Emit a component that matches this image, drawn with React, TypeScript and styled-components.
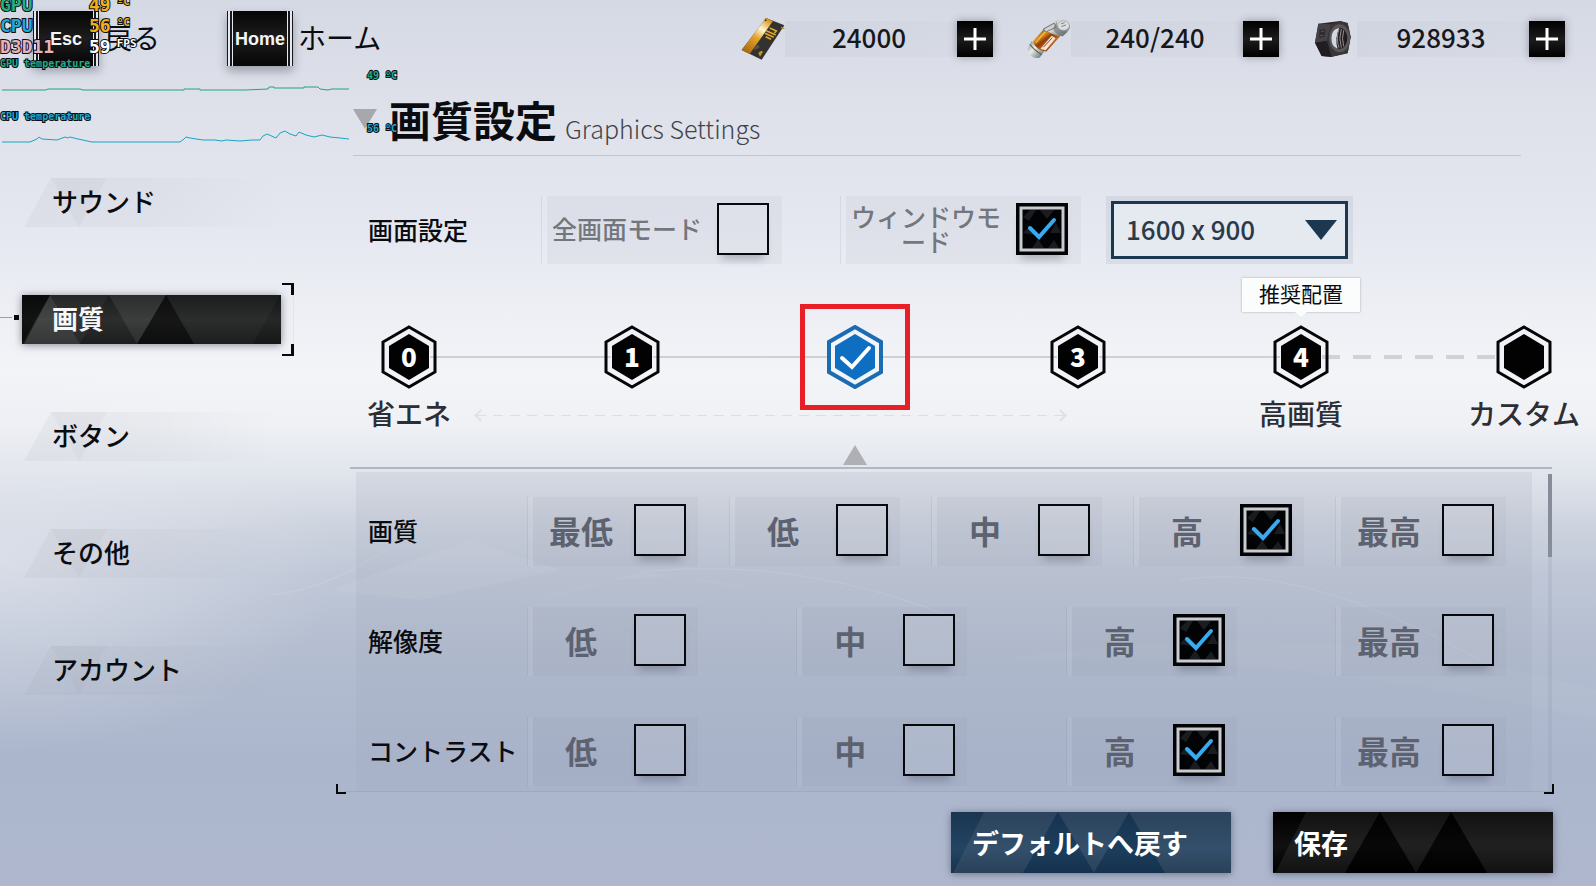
import React, { useState } from "react";
import styled, { createGlobalStyle, css } from "styled-components";

const GlobalStyle = createGlobalStyle`
  *, *::before, *::after { box-sizing: border-box; }
  body {
    margin: 0;
    font-family: "Noto Sans CJK JP", "Liberation Sans", sans-serif;
    color: #0b0c10;
  }
  button, input, select { font: inherit; color: inherit; margin: 0; }
`;

/* ---------- page ---------- */

const Page = styled.div`
  position: relative;
  isolation: isolate;
  display: flex;
  flex-direction: column;
  min-height: 100vh;
  overflow: hidden;
  background: linear-gradient(
    180deg,
    #d5d9e4 0%,
    #dee1ea 12%,
    #e4e7f0 25%,
    #edeff4 35%,
    #f3f4f8 42%,
    #eff1f5 48%,
    #e2e6ed 53%,
    #ced4df 59%,
    #bfc7d7 65%,
    #b4bed0 73%,
    #abb6cd 86%,
    #aeb7cd 100%
  );
`;

const Scenery = styled.svg`
  position: absolute;
  inset: 0;
  z-index: -1;
  width: 100%;
  height: 100%;
  pointer-events: none;
`;

const Body = styled.div`
  display: flex;
  align-items: flex-start;
  flex: 1;
`;

/* ---------- top bar ---------- */

const TopBar = styled.header`
  display: flex;
  align-items: center;
  justify-content: space-between;
  height: 77px;
  padding: 0 31px 0 33px;
`;

const KeyGroup = styled.nav`
  display: flex;
  gap: 67px;
`;

const KeyButton = styled.button`
  display: flex;
  align-items: center;
  gap: 5px;
  padding: 0;
  border: 0;
  background: none;
  font-size: 28px;
  line-height: 40px;
  white-space: nowrap;
`;

const KeyText = styled.span`
  padding-bottom: 3px;
`;

const KeyCap = styled.kbd`
  width: 66px;
  height: 55px;
  padding: 0 5px;
  border: solid #17181b;
  border-width: 0 1px;
  background: linear-gradient(#050505, #1d1d1d 50%, #050505) content-box,
    linear-gradient(90deg, #e6e8ee 2px, #17181b 2px 4px, #e6e8ee 4px calc(100% - 4px), #17181b calc(100% - 4px) calc(100% - 2px), #e6e8ee calc(100% - 2px));
  box-shadow: 0 5px 9px rgba(30, 34, 50, 0.35);
  color: #f5f5f5;
  font: bold 18px/56px "Liberation Sans", sans-serif;
  text-align: center;
`;

const Wallet = styled.div`
  display: flex;
  gap: 34px;
`;

const Currency = styled.div`
  display: flex;
  align-items: center;
  width: 252px;
`;

const CurrencyIcon = styled.svg`
  flex: none;
  width: 44px;
  height: 44px;
`;

const Amount = styled.span`
  flex: 1;
  height: 36px;
  padding-right: 4px;
  background: linear-gradient(90deg, rgba(150, 155, 170, 0.1), rgba(150, 155, 170, 0.04));
  color: #17181c;
  font-size: 26px;
  font-weight: 500;
  line-height: 32px;
  text-align: center;
`;

const PlusButton = styled.button`
  display: grid;
  place-items: center;
  width: 36px;
  height: 36px;
  padding: 0;
  border: 0;
  background: linear-gradient(#000, #1c1c1c 50%, #000);
  box-shadow: 0 0 8px rgba(40, 45, 60, 0.4);
`;

/* ---------- sidebar ---------- */

const Sidebar = styled.nav`
  display: flex;
  flex-direction: column;
  gap: 68px;
  flex: none;
  width: 350px;
  padding: 101px 0 0 22px;
`;

const TabButton = styled.button<{ $active: boolean }>`
  position: relative;
  isolation: isolate;
  width: 259px;
  height: 49px;
  padding: 0 0 3px 30px;
  border: 0;
  background: none;
  font-size: 26px;
  font-weight: 500;
  line-height: 46px;
  text-align: left;
  ${(p) =>
    p.$active &&
    css`
      background: linear-gradient(#141516, #262727 50%, #161616);
      box-shadow: 0 1px 8px rgba(60, 65, 80, 0.6);
      color: #f7f7f7;
      font-weight: 700;
    `}
`;

const Backing = styled.svg`
  position: absolute;
  inset: 0;
  z-index: -1;
  width: 100%;
  height: 100%;
`;

const Bracket = styled.span`
  position: absolute;
  top: -12px;
  left: 100%;
  width: 13px;
  height: 73px;
  border-right: 1px solid #e3e5e9;
  &::before,
  &::after {
    content: "";
    position: absolute;
    right: -1px;
    width: 12px;
    height: 12px;
    border: solid #08090c;
  }
  &::before { top: 0; border-width: 2px 3px 0 0; }
  &::after { bottom: 0; border-width: 0 3px 2px 0; }
`;

const Pointer = styled.span`
  position: absolute;
  top: 22px;
  right: 100%;
  width: 22px;
  height: 1px;
  &::before {
    content: "";
    position: absolute;
    left: 0;
    width: 12px;
    height: 1px;
    background: #9b9ea4;
  }
  &::after {
    content: "";
    position: absolute;
    left: 14px;
    top: -2px;
    width: 5px;
    height: 5px;
    background: #08090c;
  }
`;

/* ---------- main ---------- */

const Main = styled.main`
  flex: 1;
  min-width: 0;
  padding-right: 43px;
`;

const Heading = styled.div`
  display: flex;
  align-items: center;
  height: 79px;
  margin: 0 32px 0 3px;
  padding-top: 6px;
  border-bottom: 1px solid #c3c6cf;
`;

const Marker = styled.svg`
  flex: none;
  width: 24px;
  height: 20px;
  margin-right: 12px;
`;

const Titles = styled.div`
  display: flex;
  align-items: flex-end;
  gap: 8px;
`;

const Title = styled.h1`
  margin: 0;
  font-size: 42px;
  font-weight: 700;
  line-height: 60px;
`;

const Subtitle = styled.span`
  padding-bottom: 6px;
  color: #3f4248;
  font-size: 25px;
  font-weight: 300;
  line-height: 30px;
`;

const DisplayRow = styled.div`
  display: flex;
  align-items: center;
  margin-top: 40px;
  padding-left: 18px;
`;

const RowLabel = styled.span<{ $width: number }>`
  flex: none;
  width: ${(p) => p.$width}px;
  padding-bottom: 3px;
  font-size: 25px;
  font-weight: 500;
  line-height: 36px;
  white-space: nowrap;
`;

const RowGap = styled.span`
  width: 58px;
`;

const Option = styled.label<{ $wide?: boolean }>`
  display: flex;
  align-items: center;
  flex: none;
  width: ${(p) => (p.$wide ? 241 : 171)}px;
  height: ${(p) => (p.$wide ? 68 : 69)}px;
  padding: 0 ${(p) => (p.$wide ? 13 : 12)}px 3px 0;
  border-left: 1px solid rgba(120, 125, 145, 0.08);
  background: linear-gradient(90deg, rgba(255, 255, 255, 0.05) 5px, rgba(120, 124, 140, 0.07) 5px);
`;

const OptionText = styled.span<{ $wide?: boolean }>`
  flex: 1;
  padding: ${(p) => (p.$wide ? "0 15px 0 10px" : "0")};
  color: ${(p) => (p.$wide ? "#73767c" : "#5d6270")};
  font-size: ${(p) => (p.$wide ? 25 : 32)}px;
  font-weight: ${(p) => (p.$wide ? 500 : 700)};
  line-height: 25px;
  text-align: center;
  word-break: break-all;
`;

const TickFrame = styled.span`
  position: relative;
  flex: none;
  width: 52px;
  height: 52px;
`;

const TickArt = styled.svg`
  position: absolute;
  inset: 0;
  display: none;
  pointer-events: none;
`;

const TickInput = styled.input`
  display: block;
  appearance: none;
  width: 52px;
  height: 52px;
  border: 2px solid #06080c;
  background: rgba(235, 238, 240, 0.15);
  box-shadow: 0 9px 8px -5px rgba(50, 55, 70, 0.3);
  &:checked + svg { display: block; }
`;

const SelectFrame = styled.div`
  position: relative;
  width: 247px;
  margin-left: 25px;
  padding: 5px;
  background: rgba(150, 160, 175, 0.18);
`;

const Select = styled.select`
  display: block;
  appearance: none;
  width: 100%;
  height: 58px;
  padding: 0 50px 4px 12px;
  border: 3px solid #1c3850;
  border-radius: 0;
  background: #e5e9f0;
  color: #2b3a49;
  font-size: 26px;
  font-weight: 500;
`;

const SelectArrow = styled.svg`
  position: absolute;
  top: 24px;
  right: 16px;
  width: 32px;
  height: 20px;
  pointer-events: none;
`;

/* ---------- quality steps ---------- */

const Stepper = styled.div`
  position: relative;
  display: flex;
  align-items: flex-start;
  height: 142px;
  margin: 61px 1px 0 31px;
`;

const Step = styled.label`
  position: relative;
  z-index: 1;
  display: flex;
  flex-direction: column;
  align-items: center;
  flex: none;
  width: 56px;
`;

const StepInput = styled.input`
  position: absolute;
  top: 0;
  left: 0;
  width: 56px;
  height: 64px;
  opacity: 0;
`;

const HexBox = styled.span`
  position: relative;
  display: grid;
  place-items: center;
  width: 56px;
  height: 64px;
`;

const HexArt = styled.svg`
  grid-area: 1 / 1;
`;

const HexNumber = styled.span`
  grid-area: 1 / 1;
  padding-bottom: 3px;
  color: #fff;
  font: 900 26px/30px "Noto Sans CJK JP", "Liberation Sans", sans-serif;
`;

const StepLabel = styled.span`
  margin-top: 4px;
  color: #2c2e33;
  font-size: 28px;
  font-weight: 500;
  line-height: 40px;
  white-space: nowrap;
`;

const Connector = styled.span<{ $dashed?: boolean }>`
  flex: 1;
  height: ${(p) => (p.$dashed ? 4 : 2)}px;
  margin: ${(p) => (p.$dashed ? 30 : 31)}px -7px 0;
  background: ${(p) =>
    p.$dashed ? "repeating-linear-gradient(90deg, #d0d2d7 0 18px, transparent 18px 31px)" : "#cfd1d5"};
`;

const Highlight = styled.span`
  position: absolute;
  inset: -21px -27px;
  border: 5px solid #e91f27;
  pointer-events: none;
`;

const Balloon = styled.span`
  position: absolute;
  bottom: calc(100% + 13px);
  left: 50%;
  width: 118px;
  height: 34px;
  margin-left: -59px;
  background: #fbfcfc;
  box-shadow: 0 0 2px rgba(90, 95, 110, 0.5);
  font-size: 21px;
  line-height: 31px;
  text-align: center;
  &::after {
    content: "";
    position: absolute;
    top: 100%;
    left: 53px;
    border: solid transparent;
    border-top-color: #fbfcfc;
    border-width: 5px 6px 0;
  }
`;

const Caret = styled.svg`
  position: absolute;
  top: 120px;
  width: 24px;
  height: 20px;
`;

const RangeArrow = styled.span`
  position: absolute;
  top: 90px;
  left: 95px;
  right: calc(40% + 19px);
  height: 1px;
  background: repeating-linear-gradient(90deg, #dcdee4 0 10px, transparent 10px 17px);
  &::before,
  &::after {
    content: "";
    position: absolute;
    top: -4px;
    width: 9px;
    height: 9px;
    border: solid #dfe1e6;
    transform: rotate(45deg);
  }
  &::before { left: 0; border-width: 0 0 2px 2px; }
  &::after { right: 0; border-width: 2px 2px 0 0; }
`;

/* ---------- detail panel ---------- */

const Frame = styled.section`
  position: relative;
  display: flex;
  gap: 16px;
  margin-right: 1px;
  padding: 3px 0 0 6px;
  border-top: 2px solid #b3b7c2;
  &::after {
    content: "";
    position: absolute;
    left: -6px;
    right: 0;
    bottom: 0;
    height: 1px;
    background: #a0a9be;
  }
`;

const Corner = styled.span<{ $side: "left" | "right" }>`
  position: absolute;
  bottom: -2px;
  ${(p) => p.$side}: ${(p) => (p.$side === "left" ? -14 : -2)}px;
  width: 10px;
  height: 10px;
  border: solid #05070b;
  border-width: ${(p) => (p.$side === "left" ? "0 0 2px 2px" : "0 2px 2px 0")};
`;

const Panel = styled.div`
  display: flex;
  flex-direction: column;
  gap: 41px;
  flex: 1;
  padding: 25px 26px 6px 12px;
  background: linear-gradient(rgba(110, 115, 140, 0.1), rgba(130, 140, 155, 0.07));
`;

const Row = styled.div`
  display: flex;
  align-items: center;
`;

const Options = styled.div`
  display: flex;
  justify-content: space-between;
  flex: 1;
`;

const Track = styled.div`
  width: 4px;
  margin-top: 2px;
  background: rgba(130, 138, 160, 0.16);
`;

const Thumb = styled.div`
  height: 83px;
  background: #868c9a;
`;

const Footer = styled.footer`
  display: flex;
  justify-content: flex-end;
  gap: 42px;
  margin: 20px 0 12px;
`;

const ActionButton = styled.button<{ $tone: "blue" | "black" }>`
  position: relative;
  isolation: isolate;
  width: 280px;
  height: 61px;
  padding: 0 0 0 21px;
  border: 0;
  background: ${(p) =>
    p.$tone === "blue" ? "linear-gradient(#1a3550, #234563 60%, #17324c)" : "linear-gradient(#000, #101010 55%, #000)"};
  box-shadow: 0 1px 7px rgba(50, 58, 80, 0.55);
  color: #fff;
  font-size: 27px;
  font-weight: 700;
  line-height: 61px;
  text-align: left;
`;

/* ---------- performance overlay ---------- */

const Monitor = styled.aside`
  position: absolute;
  top: -6px;
  left: 0;
  width: 402px;
  pointer-events: none;
  font: bold 18px/21px "DejaVu Sans Mono", monospace;
`;

const outlined = css`
  -webkit-text-stroke: 2px #0c0d10;
  paint-order: stroke fill;
`;

const Reading = styled.div<{ $color: string }>`
  display: flex;
  height: 21px;
  color: ${(p) => p.$color};
  ${outlined}
`;

const ReadingName = styled.span<{ $color: string }>`
  width: 89px;
  color: ${(p) => p.$color};
`;

const ReadingUnit = styled.sup`
  margin-left: 6px;
  font-size: 11px;
  line-height: 16px;
  vertical-align: top;
`;

const Trace = styled.div<{ $color: string }>`
  display: flex;
  gap: 16px;
  height: 53px;
  color: ${(p) => p.$color};
  font-size: 10px;
  line-height: 13px;
`;

const TracePlot = styled.div`
  width: 351px;
`;

const TraceName = styled.div`
  ${outlined}
`;

const TraceValue = styled.span`
  padding-top: 12px;
  white-space: pre;
  ${outlined}
`;

/* ---------- drawings ---------- */

const Facets = ({ light, dark }: { light: string; dark: string }) => (
  <Backing viewBox="0 0 280 61" preserveAspectRatio="none" aria-hidden="true">
    <path d="M33 0H107L72 61H2Z" fill={light} />
    <path d="M107 0H178L143 61Z" fill={light} />
    <path d="M178 0H280V61H214Z" fill={light} />
    <path d="M107 0L143 61H72Z" fill={dark} />
    <path d="M178 0L214 61H143Z" fill={dark} />
  </Backing>
);

const TabFacets = ({ active }: { active: boolean }) =>
  active ? (
    <Backing viewBox="0 0 259 49" preserveAspectRatio="none" aria-hidden="true">
      <path d="M28 0L58 49H2Z" fill="#fff" opacity="0.14" />
      <path d="M28 0H87L58 49Z" fill="#fff" opacity="0.07" />
      <path d="M87 0H144L115 49Z" fill="#fff" opacity="0.1" />
      <path d="M87 0L115 49H58Z" fill="#fff" opacity="0.03" />
      <path d="M144 0L172 49H115Z" fill="#000" opacity="0.4" />
      <path d="M144 0H258L231 49H172Z" fill="#fff" opacity="0.03" />
      <path d="M0 0H28L0 49Z" fill="#000" opacity="0.5" />
    </Backing>
  ) : (
    <Backing viewBox="0 0 259 49" preserveAspectRatio="none" aria-hidden="true">
      <defs>
        <linearGradient id="tabFade">
          <stop offset="0" stopColor="#80858f" stopOpacity="0.08" />
          <stop offset="0.5" stopColor="#80858f" stopOpacity="0.06" />
          <stop offset="1" stopColor="#80858f" stopOpacity="0" />
        </linearGradient>
      </defs>
      <path d="M29 0H259V49H2Z" fill="url(#tabFade)" />
      <path d="M29 0H85L57 49Z" fill="#80858f" opacity="0.06" />
    </Backing>
  );

const Card = () => (
  <CurrencyIcon viewBox="60 49 132 132" aria-hidden="true">
    <defs>
      <linearGradient id="gold" x1="0.8" y1="0" x2="0.2" y2="1">
        <stop offset="0" stopColor="#d3921a" />
        <stop offset="0.3" stopColor="#fff6d0" />
        <stop offset="0.55" stopColor="#e4a42c" />
        <stop offset="1" stopColor="#a9670e" />
      </linearGradient>
    </defs>
    <path d="M135 52L190 74L122 177L62 148Z" fill="#34322f" />
    <path d="M135 52L156 61L86 160L62 148Z" fill="url(#gold)" />
    <path d="M146 82L166 91L160 97M136 90L164 103M132 98L158 110M134 108L150 116" stroke="#dfa62b" strokeWidth="5" fill="none" />
    <path d="M180 80L190 84" stroke="#b98316" strokeWidth="4" />
    <path d="M112 157Q120 148 126 153L117 168Z" fill="#c8931f" />
    <path d="M98 140L112 132L116 140L102 148Z" fill="#56534b" />
    <circle cx="134" cy="59" r="3" fill="#57380a" />
  </CurrencyIcon>
);

const Battery = () => (
  <CurrencyIcon viewBox="917 50 134 132" aria-hidden="true">
    <defs>
      <linearGradient id="amber" x1="0.1" y1="0.1" x2="0.8" y2="0.9">
        <stop offset="0" stopColor="#5a2408" />
        <stop offset="0.3" stopColor="#e39a22" />
        <stop offset="0.5" stopColor="#8e3d0a" />
        <stop offset="0.75" stopColor="#c46a14" />
        <stop offset="1" stopColor="#4a1d06" />
      </linearGradient>
      <linearGradient id="steel" x1="0" y1="0" x2="1" y2="1">
        <stop offset="0" stopColor="#83878a" />
        <stop offset="0.4" stopColor="#e9ebeb" />
        <stop offset="0.7" stopColor="#9b9f9f" />
        <stop offset="1" stopColor="#4e5354" />
      </linearGradient>
    </defs>
    <path d="M920 144L930 122L972 150L956 172Q942 178 928 166Q918 157 920 144Z" fill="url(#steel)" />
    <path d="M926 132Q938 150 962 164" stroke="#4d6e58" strokeWidth="4" fill="none" />
    <path d="M934 124L972 82L1018 108L976 154Q948 152 934 124Z" fill="url(#amber)" />
    <path d="M958 146L992 106L1004 114L974 150Z" fill="#f4e6d8" />
    <path d="M967 141L994 112" stroke="#b02c18" strokeWidth="3" />
    <path d="M944 128L974 92" stroke="#ffcf62" strokeWidth="3" />
    <path d="M968 84L1008 58Q1040 52 1048 76Q1050 88 1026 108Q994 106 968 84Z" fill="url(#steel)" />
    <path d="M966 86L1000 68L1006 80L976 94Z" fill="#cfd2d2" stroke="#6d7172" strokeWidth="3" />
    <path d="M1008 62Q1006 84 1040 94L1024 108Q1000 100 996 84Z" fill="#6d7273" opacity="0.6" />
    <ellipse cx="1028" cy="75" rx="18" ry="15" fill="#dcdfdf" stroke="#8b8f8f" strokeWidth="2" />
    <path d="M1020 70L1032 66M1022 78L1036 73" stroke="#7c8080" strokeWidth="3" />
  </CurrencyIcon>
);

const Nut = () => (
  <CurrencyIcon viewBox="494 48 132 132" aria-hidden="true">
    <path d="M510 68L575 60L598 66L607 108L598 157L548 168L520 165L500 125Z" fill="#2b292d" />
    <path d="M510 68L548 70L536 120L500 125Z" fill="#454247" />
    <path d="M500 125L536 120L550 167L520 165Z" fill="#1f1d21" />
    <path d="M548 70L578 61L598 67L607 108L598 156L550 167L536 120Z" fill="#39363a" />
    <ellipse cx="574" cy="112" rx="31" ry="42" fill="#5b5659" />
    <ellipse cx="573" cy="112" rx="24" ry="32" fill="#211e22" />
    <path d="M573 80Q549 84 549 112Q549 138 568 143Q558 112 573 80Z" fill="#d3d8e3" />
    <path d="M572 84Q562 112 572 140M579 84Q570 112 579 140M586 88Q579 112 586 136" stroke="#968e8e" strokeWidth="3" fill="none" />
    <path d="M514 86L532 84L528 108L512 110Z" fill="#2f2c31" />
    <path d="M518 92L528 90M514 104L524 103" stroke="#6a666c" strokeWidth="2" />
  </CurrencyIcon>
);

const Plus = () => (
  <svg width="24" height="24" viewBox="0 0 24 24" aria-hidden="true">
    <path d="M12 1V23M1 12H23" stroke="#fff" strokeWidth="3" />
  </svg>
);

const Tick = () => (
  <TickArt width="52" height="52" viewBox="0 0 52 52" aria-hidden="true">
    <path d="M0 0H52V52H0Z" fill="#020305" />
    <path d="M5 5H47V47H5Z" fill="none" stroke="#c9cbd0" strokeWidth="3" />
    <path d="M7 14L14 7H20L13 18ZM24 7L31 16L38 7ZM7 30L14 22L18 32ZM34 30L40 20L45 30ZM16 45L22 36L28 45ZM32 45L38 37L43 45Z" fill="#1b1c1f" />
    <path d="M14 25L23 34L38 17" fill="none" stroke="#38aaf0" strokeWidth="4" strokeLinecap="round" />
  </TickArt>
);

const Hex = ({ on }: { on: boolean }) => (
  <HexArt width="56" height="64" viewBox="0 0 56 64" aria-hidden="true">
    <path
      d="M28 2L54 17V47L28 62L2 47V17Z"
      fill={on ? "#f3f4f8" : "none"}
      stroke={on ? "#1b6cb3" : "#050505"}
      strokeWidth={on ? 4 : 3}
    />
    <path d="M28 9L48 21V43L28 55L8 43V21Z" fill={on ? "#0e6fc2" : "#020202"} />
    {on && <path d="M15 33L25 42L42 23" fill="none" stroke="#fff" strokeWidth="4" strokeLinecap="round" />}
  </HexArt>
);

/* ---------- content ---------- */

const tabs = ["サウンド", "画質", "ボタン", "その他", "アカウント"];

const wallet = [
  { name: "カード", amount: "24000", icon: <Card /> },
  { name: "バッテリー", amount: "240/240", icon: <Battery /> },
  { name: "ナット", amount: "928933", icon: <Nut /> },
];

const steps = [
  { mark: "0", label: "省エネ" },
  { mark: "1" },
  { mark: "2", marked: true },
  { mark: "3" },
  { mark: "4", label: "高画質", tip: "推奨配置" },
  { mark: "", label: "カスタム" },
];

const settings = [
  { name: "画質", options: ["最低", "低", "中", "高", "最高"] },
  { name: "解像度", options: ["低", "中", "高", "最高"] },
  { name: "コントラスト", options: ["低", "中", "高", "最高"] },
];

const Choice = ({ group, text, wide, on }: { group: string; text: string; wide?: boolean; on?: boolean }) => (
  <Option $wide={wide}>
    <OptionText $wide={wide}>{text}</OptionText>
    <TickFrame>
      <TickInput type="radio" name={group} defaultChecked={on} />
      <Tick />
    </TickFrame>
  </Option>
);

export default function App() {
  const [tab, setTab] = useState("画質");
  const [step, setStep] = useState(2);

  return (
    <Page>
      <GlobalStyle />
      <Scenery viewBox="0 0 1596 886" preserveAspectRatio="none" aria-hidden="true">
        <defs>
          <radialGradient id="mist" cx="0.5" cy="0.5" r="0.5">
            <stop offset="0" stopColor="#e6e8f0" stopOpacity="0.65" />
            <stop offset="1" stopColor="#e6e8f0" stopOpacity="0" />
          </radialGradient>
        </defs>
        <ellipse cx="0" cy="560" rx="340" ry="190" fill="url(#mist)" />
        <path d="M330 590L470 540L560 570L420 600ZM540 600Q640 560 760 590L640 572Z" fill="#fff" opacity="0.07" />
        <path d="M270 595Q330 590 400 540M640 572Q800 555 960 620M1180 580Q1300 560 1480 660" stroke="#fff" opacity="0.12" fill="none" />
        <path d="M1000 660Q1300 610 1596 690V720Q1280 650 1000 660Z" fill="#fff" opacity="0.03" />
      </Scenery>

      <TopBar>
        <KeyGroup aria-label="ショートカット">
          <KeyButton type="button"><KeyCap>Esc</KeyCap><KeyText>戻る</KeyText></KeyButton>
          <KeyButton type="button"><KeyCap>Home</KeyCap><KeyText>ホーム</KeyText></KeyButton>
        </KeyGroup>
        <Wallet>
          {wallet.map((w) => (
            <Currency key={w.name}>
              {w.icon}
              <Amount>{w.amount}</Amount>
              <PlusButton type="button" aria-label={`${w.name}を追加`}><Plus /></PlusButton>
            </Currency>
          ))}
        </Wallet>
      </TopBar>

      <Body>
        <Sidebar aria-label="設定">
          {tabs.map((t) => (
            <TabButton key={t} type="button" $active={t === tab} onClick={() => setTab(t)}>
              <TabFacets active={t === tab} />
              {t}
              {t === tab && <><Pointer /><Bracket /></>}
            </TabButton>
          ))}
        </Sidebar>

        <Main>
          <Heading>
            <Marker viewBox="0 0 24 20" aria-hidden="true"><path d="M0 0H24L12 20Z" fill="#a6a8ac" /></Marker>
            <Titles>
              <Title>画質設定</Title>
              <Subtitle>Graphics Settings</Subtitle>
            </Titles>
          </Heading>

          <DisplayRow role="group" aria-label="画面設定">
            <RowLabel $width={173}>画面設定</RowLabel>
            <Choice group="screen" text="全画面モード" wide />
            <RowGap />
            <Choice group="screen" text="ウィンドウモード" wide on />
            <SelectFrame>
              <Select aria-label="解像度" defaultValue="1600 x 900">
                <option>1280 x 720</option>
                <option>1600 x 900</option>
                <option>1920 x 1080</option>
              </Select>
              <SelectArrow viewBox="0 0 32 20" aria-hidden="true"><path d="M0 0H32L16 20Z" fill="#1c3850" /></SelectArrow>
            </SelectFrame>
          </DisplayRow>

          <Stepper role="radiogroup" aria-label="画質プリセット">
            {steps.map((s, i) => (
              <React.Fragment key={i}>
                {i > 0 && <Connector $dashed={i === steps.length - 1} />}
                <Step>
                  <StepInput
                    type="radio"
                    name="preset"
                    aria-label={s.label ?? s.mark}
                    checked={step === i}
                    onChange={() => setStep(i)}
                  />
                  <HexBox>
                    <Hex on={step === i} />
                    {step !== i && <HexNumber>{s.mark}</HexNumber>}
                    {s.marked && <Highlight />}
                    {s.tip && <Balloon>{s.tip}</Balloon>}
                  </HexBox>
                  {s.label && <StepLabel>{s.label}</StepLabel>}
                  {step === i && (
                    <Caret viewBox="0 0 24 20" aria-hidden="true"><path d="M12 0L24 20H0Z" fill="#aeb0b5" /></Caret>
                  )}
                </Step>
              </React.Fragment>
            ))}
            <RangeArrow />
          </Stepper>

          <Frame>
            <Panel>
              {settings.map((s) => (
                <Row key={s.name} role="radiogroup" aria-label={s.name}>
                  <RowLabel $width={159}>{s.name}</RowLabel>
                  <Options>
                    {s.options.map((o) => (
                      <Choice key={o} group={s.name} text={o} on={o === "高"} />
                    ))}
                  </Options>
                </Row>
              ))}
            </Panel>
            <Track><Thumb /></Track>
            <Corner $side="left" />
            <Corner $side="right" />
          </Frame>

          <Footer>
            <ActionButton type="button" $tone="blue">
              <Facets light="rgba(110,120,135,0.22)" dark="rgba(15,50,80,0.35)" />
              デフォルトへ戻す
            </ActionButton>
            <ActionButton type="button" $tone="black">
              <Facets light="rgba(255,255,255,0.07)" dark="rgba(0,0,0,0.5)" />
              保存
            </ActionButton>
          </Footer>
        </Main>
      </Body>

      <Monitor>
        <Reading $color="#f3ae1c"><ReadingName $color="#25b07f">GPU</ReadingName>49<ReadingUnit>ºC</ReadingUnit></Reading>
        <Reading $color="#f3ae1c"><ReadingName $color="#21a9d6">CPU</ReadingName>56<ReadingUnit>ºC</ReadingUnit></Reading>
        <Reading $color="#ffffff"><ReadingName $color="#e6b3b8">D3D11</ReadingName>59<ReadingUnit>FPS</ReadingUnit></Reading>
        <Trace $color="#1fae80">
          <TracePlot>
            <TraceName>GPU temperature</TraceName>
            <svg width="351" height="38" viewBox="0 0 351 38" aria-hidden="true">
              <path d="M2 20H46L48 19H80L83 20H184V19H200V20H245L268 19L269 17H274V18H304V17H318L320 19L328 20L332 19H349" fill="none" stroke="#1fa57c" />
            </svg>
          </TracePlot>
          <TraceValue>49 ºC</TraceValue>
        </Trace>
        <Trace $color="#21a9c8">
          <TracePlot>
            <TraceName>CPU temperature</TraceName>
            <svg width="351" height="40" viewBox="0 0 351 40" aria-hidden="true">
              <path d="M2 19H30L37 16L39 14L42 16L57 17L65 14L68 15L70 14L78 16L92 19H180L184 16L186 14L190 15L203 17H215L222 18L226 17L240 18L252 17H260L263 13L267 11L276 15L280 10L285 8L290 11L296 13L299 9L306 12L314 14L322 12L330 14L340 15L349 16" fill="none" stroke="#18a3c4" />
            </svg>
          </TracePlot>
          <TraceValue>56 ºC</TraceValue>
        </Trace>
      </Monitor>
    </Page>
  );
}
